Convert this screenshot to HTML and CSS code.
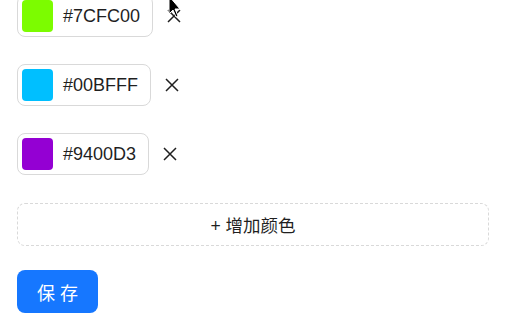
FILE: index.html
```html
<!DOCTYPE html>
<html lang="zh-CN">
<head>
    <meta charset="UTF-8">
    <meta name="viewport" content="width=device-width, initial-scale=1.0">
    <title>颜色设置</title>
    <link rel="stylesheet" href="styles.css">
</head>
<body>
    <div class="panel">
        <div class="color-list">
            <div class="color-row">
                <div class="color-input">
                    <span class="swatch" style="background: #7CFC00"></span>
                    <span class="hex">#7CFC00</span>
                </div>
                <button class="remove" title="删除">
                    <svg width="14" height="14" viewBox="0 0 14 14"><path d="M1 1L13 13M13 1L1 13" stroke="#1f1f1f" stroke-width="1.5" fill="none"/></svg>
                </button>
            </div>
            <div class="color-row">
                <div class="color-input">
                    <span class="swatch" style="background: #00BFFF"></span>
                    <span class="hex">#00BFFF</span>
                </div>
                <button class="remove" title="删除">
                    <svg width="14" height="14" viewBox="0 0 14 14"><path d="M1 1L13 13M13 1L1 13" stroke="#1f1f1f" stroke-width="1.5" fill="none"/></svg>
                </button>
            </div>
            <div class="color-row">
                <div class="color-input">
                    <span class="swatch" style="background: #9400D3"></span>
                    <span class="hex">#9400D3</span>
                </div>
                <button class="remove" title="删除">
                    <svg width="14" height="14" viewBox="0 0 14 14"><path d="M1 1L13 13M13 1L1 13" stroke="#1f1f1f" stroke-width="1.5" fill="none"/></svg>
                </button>
            </div>
        </div>

        <button class="add-btn">+ 增加颜色</button>

        <button class="save-btn">保 存</button>
    </div>

    <svg class="cursor" width="14" height="22" viewBox="0 0 14 22"><path d="M1 -4L1 14L5 10L8 17L10 16L7 9L12 9Z" fill="#000" stroke="#fff" stroke-width="1"/></svg>
</body>
</html>
```

FILE: styles.css
```css
body {
    margin: 0;
    font-family: "Liberation Sans", "Noto Sans CJK SC", sans-serif;
    color: #1f1f1f;
    background: #fff;
    overflow: hidden;
}
.panel {
    margin-top: -5px;
    padding: 0 23px 0 17px;
}
.color-list {
    display: flex;
    flex-direction: column;
    gap: 27px;
}
.color-row {
    display: flex;
    align-items: center;
    gap: 13px;
}
.color-input {
    display: inline-flex;
    align-items: center;
    height: 42px;
    box-sizing: border-box;
    padding: 0 12px 0 4px;
    border: 1px solid #d9d9d9;
    border-radius: 8px;
    gap: 10px;
}
.swatch {
    width: 31px;
    height: 32px;
    border-radius: 4px;
}
.hex {
    font-size: 18px;
}
.remove {
    border: none;
    background: none;
    padding: 0;
    width: 16px;
    height: 16px;
    display: flex;
    align-items: center;
    justify-content: center;
}
.add-btn {
    display: block;
    width: 100%;
    height: 43px;
    margin-top: 28px;
    border: 1px dashed #d9d9d9;
    border-radius: 8px;
    background: #fff;
    font-family: "Liberation Sans", "Noto Sans CJK SC", sans-serif;
    font-size: 17.5px;
    color: #1f1f1f;
}
.save-btn {
    display: block;
    margin-top: 24px;
    height: 43px;
    padding: 0 20px;
    border: none;
    border-radius: 8px;
    background: #1677ff;
    color: #fff;
    font-family: "Liberation Sans", "Noto Sans CJK SC", sans-serif;
    font-size: 18px;
}
.cursor {
    position: absolute;
    left: 168px;
    top: 0;
}
```
